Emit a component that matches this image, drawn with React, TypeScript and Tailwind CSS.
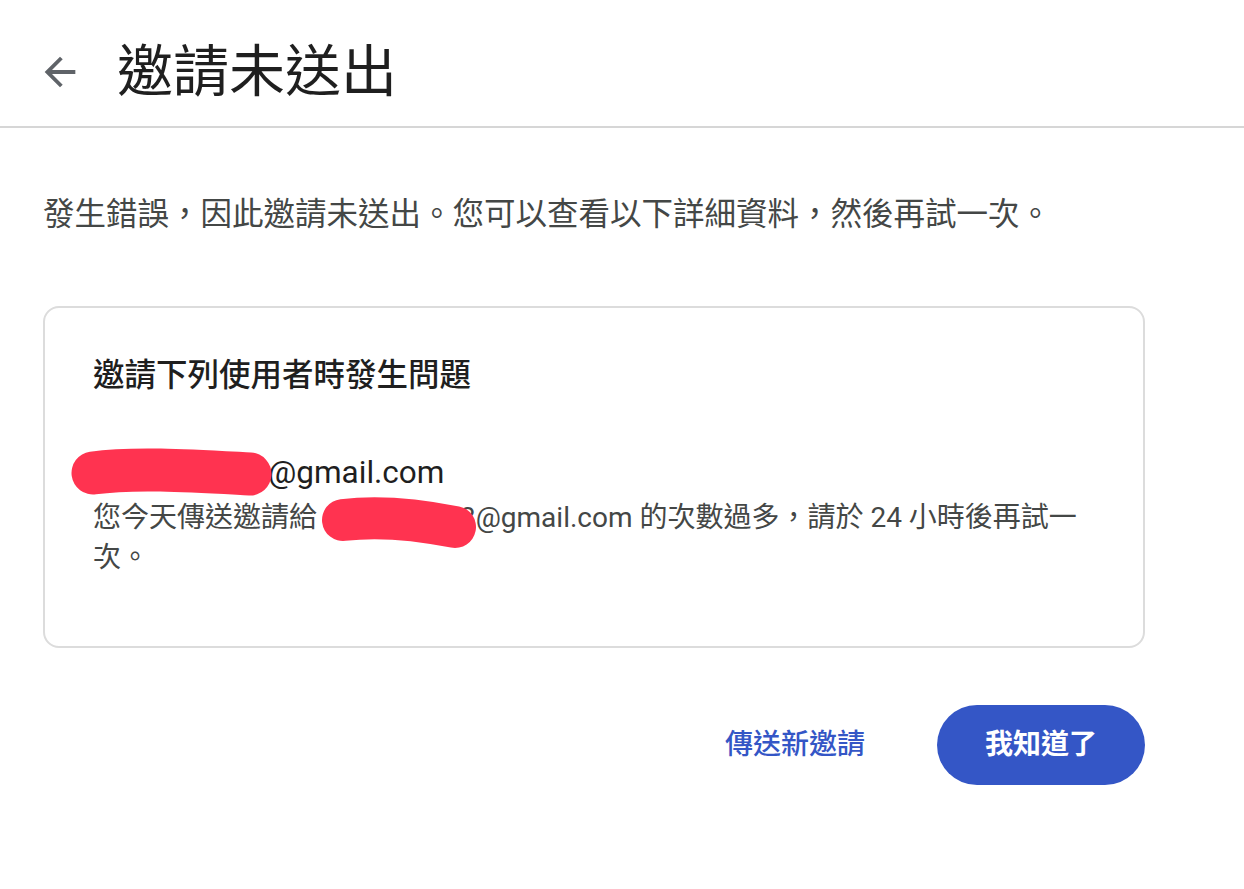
import React from "react";

export default function App() {
  return (
    <div
      className="w-[1244px] h-[889px] bg-white text-[#1f1f1f] overflow-hidden"
      style={{ fontFamily: 'Roboto, "Noto Sans CJK TC", "Noto Sans", sans-serif' }}
    >
      <header className="h-[128px] border-b-2 border-[#d6d6d6] flex items-center pt-[18px]">
        <svg
          className="ml-[37px] w-[46px] h-[46px] text-[#5f6368]"
          viewBox="0 0 24 24"
          fill="currentColor"
        >
          <path d="M20 11H7.83l5.59-5.59L12 4l-8 8 8 8 1.41-1.41L7.83 13H20v-2z" />
        </svg>
        <h1 className="ml-[34px] text-[56px] leading-[64px] font-normal text-[#1f1f1f]">
          邀請未送出
        </h1>
      </header>

      <main className="ml-[43px] w-[1102px]">
        <p className="mt-[63px] text-[31.5px] leading-[48px] text-[#444746]">
          發生錯誤，因此邀請未送出。您可以查看以下詳細資料，然後再試一次。
        </p>

        <section className="relative mt-[67px] h-[342px] rounded-[16px] border-2 border-[#dcdcdc] px-[48px] pt-[48px]">
          <h2 className="text-[31.5px] leading-[40px] font-medium text-[#1f1f1f]">
            邀請下列使用者時發生問題
          </h2>
          <div className="mt-[57px] text-[31.5px] leading-[40px] text-[#1f1f1f]">
            <span className="inline-block w-[175px]"></span>@gmail.com
          </div>
          <p className="mt-[5px] text-[28px] leading-[40px] text-[#444746]">
            您今天傳送邀請給 <span className="inline-block w-[136px]"></span>3@gmail.com
            的次數過多，請於 24 小時後再試一次。
          </p>

          <svg
            className="absolute left-0 top-0 pointer-events-none"
            width="1102"
            height="342"
            viewBox="0 0 1102 342"
          >
            <path
              d="M48 165 C 90 159, 150 163, 205 166"
              stroke="#ff3350"
              strokeWidth="43"
              strokeLinecap="round"
              fill="none"
            />
            <path
              d="M298 212 C 330 208, 370 211, 410 219"
              stroke="#ff3350"
              strokeWidth="42"
              strokeLinecap="round"
              fill="none"
            />
          </svg>
        </section>

        <div className="mt-[57px] flex items-center justify-end gap-[48px]">
          <button className="px-[24px] h-[80px] text-[28px] font-medium text-[#3456c6]">
            傳送新邀請
          </button>
          <button className="w-[208px] h-[80px] rounded-full bg-[#3456c6] text-white text-[28px] font-bold">
            我知道了
          </button>
        </div>
      </main>
    </div>
  );
}
